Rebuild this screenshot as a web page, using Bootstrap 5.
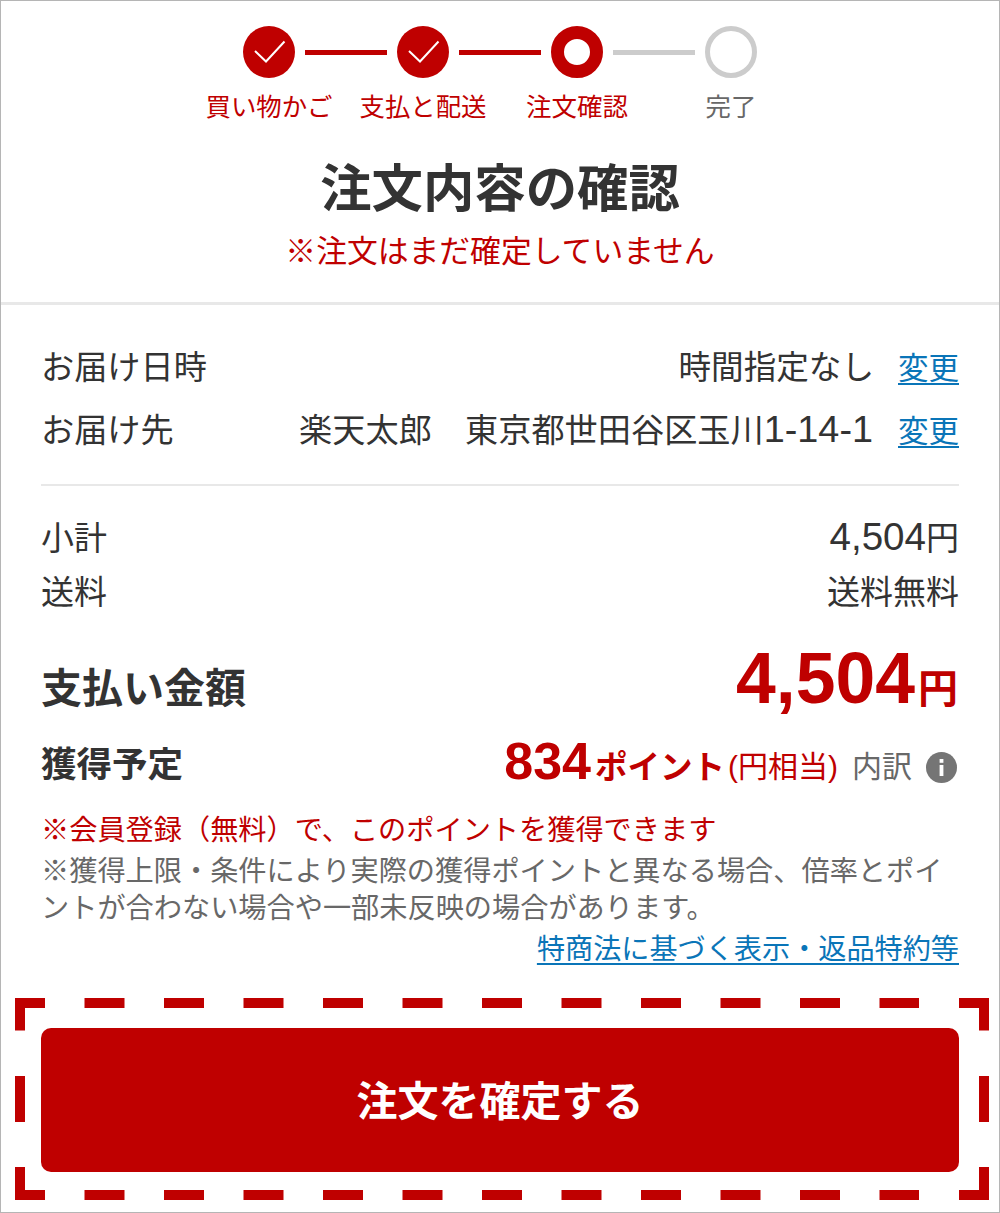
<!DOCTYPE html>
<html lang="ja"><head><meta charset="utf-8"><title>注文内容の確認</title>
<link href="https://cdn.jsdelivr.net/npm/bootstrap@5.3.0/dist/css/bootstrap.min.css" rel="stylesheet">
<style>
html,body{margin:0;background:#fff}
body{font-family:"Liberation Sans","Noto Sans CJK JP",sans-serif;color:#333;width:1000px;height:1213px;overflow:hidden}
.shell{width:1000px;height:1213px;border:1px solid #b5b5b5;position:relative}
.stepbar{padding-top:25px}
.dot{width:52px;height:52px;border-radius:50%;background:#bf0000;flex:none}
.dot svg{display:block}
.dot-cur{background:#fff;border:13px solid #bf0000}
.dot-off{background:#fff;border:5px solid #ccc}
.rail{width:82px;height:5px;background:#bf0000;margin:0 10px;flex:none}
.rail-off{background:#ccc}
.labels{margin-top:15px;height:28px}
.lab{width:154px;text-align:center;font-size:25.4px;line-height:28px;color:#bf0000;white-space:nowrap}
.lab-off{color:#686868}
.lab-c{font-size:25.5px}
.title{font-size:51.4px;line-height:60px;font-weight:700;margin:38px 0 0;color:#333}
.warn{font-size:30.8px;line-height:40px;color:#bf0000;margin-top:13px}
.rule1{height:3px;background:#e8e8e8;margin-top:30px}
.body-wrap{padding:0 40px}
.rowa{font-size:33.2px;line-height:44px;height:44px}
.rowa-first{margin-top:41px}
.rowa-next{margin-top:19px}
.ln{font-size:30.5px;color:#0a75b8;text-decoration:underline;text-underline-offset:4px;text-decoration-thickness:2px;margin-left:25px}
.ln-tight{margin-left:24px}
.txt-s{font-size:32.6px}
.rule2{height:2px;background:#e8e8e8;margin-top:31px}
.rowb{font-size:33px;line-height:44px;height:44px}
.rowb-first{margin-top:31px}
.rowb-next{margin-top:10px}
.dg{font-size:37.8px;line-height:1}
.dg-w{font-size:38.6px;line-height:1}
.sum{margin-top:17px;height:96px}
.sum-l{font-size:41px;font-weight:700;line-height:50px;margin-top:18px}
.big{font-size:71.5px;font-weight:700;color:#bf0000;line-height:80px;margin-top:6px}
.big-u{font-size:40px;font-weight:700;color:#bf0000;margin-left:3px;margin-right:1px}
.pts{height:56px;margin-top:9px;padding-right:2px}
.pts-l{font-size:35.5px;font-weight:700;line-height:50px}
.n834{font-size:52px;font-weight:700;color:#bf0000;line-height:48px;margin-bottom:8px}
.pt-u{font-size:32.5px;font-weight:700;color:#bf0000;margin-left:4px;margin-top:6px}
.pt-e{font-size:30px;color:#bf0000;margin-left:3px;margin-top:2px}
.pt-in{font-size:30px;color:#686868;margin-left:14px;margin-top:2px}
.ico{width:31px;height:31px;margin-left:14px;margin-top:4px;flex:none;display:block}
.n-red{font-size:28.2px;line-height:38px;color:#bf0000;margin-top:18px}
.n-gray{font-size:28.2px;line-height:37px;color:#686868;margin-top:4px}
.n-link{font-size:28.15px;line-height:38px;text-align:right;margin-top:4px}
.n-link a{color:#0a75b8;text-decoration:underline;text-underline-offset:4px;text-decoration-thickness:2px}
.cta-wrap{padding:0 40px;margin-top:59px}
.cta{display:block;width:100%;height:144px;background:#bf0000;border:0;border-radius:10px;color:#fff;font-size:41px;font-weight:700;line-height:140px;padding:4px 0 0}
.frame{position:absolute;left:-1px;top:-1px;width:1000px;height:1213px;pointer-events:none}
</style></head>
<body>
<div class="shell">
  <div class="stepbar">
    <div class="d-flex justify-content-center align-items-center">
      <div class="dot"><svg width="52" height="52" viewBox="-26 -26 52 52"><path d="M-14 -1 L-3 9.5 L15.5 -10.5" fill="none" stroke="#fff" stroke-width="2"/></svg></div>
      <div class="rail"></div>
      <div class="dot"><svg width="52" height="52" viewBox="-26 -26 52 52"><path d="M-14 -1 L-3 9.5 L15.5 -10.5" fill="none" stroke="#fff" stroke-width="2"/></svg></div>
      <div class="rail"></div>
      <div class="dot dot-cur"></div>
      <div class="rail rail-off"></div>
      <div class="dot dot-off"></div>
    </div>
    <div class="labels d-flex justify-content-center">
      <div class="lab">買い物かご</div><div class="lab">支払と配送</div><div class="lab lab-c">注文確認</div><div class="lab lab-off">完了</div>
    </div>
  </div>
  <h1 class="title text-center">注文内容の確認</h1>
  <div class="warn text-center">※注文はまだ確定していません</div>
  <div class="rule1"></div>
  <div class="body-wrap">
    <div class="rowa rowa-first d-flex justify-content-between"><span>お届け日時</span><span><span class="txt-s">時間指定なし</span><a class="ln ln-tight" href="#">変更</a></span></div>
    <div class="rowa rowa-next d-flex justify-content-between"><span>お届け先</span><span>楽天太郎　東京都世田谷区玉川<span class="dg">1-14-1</span><a class="ln" href="#">変更</a></span></div>
    <div class="rule2"></div>
    <div class="rowb rowb-first d-flex justify-content-between"><span>小計</span><span><span class="dg-w">4,504</span>円</span></div>
    <div class="rowb rowb-next d-flex justify-content-between"><span>送料</span><span>送料無料</span></div>
    <div class="sum d-flex justify-content-between align-items-center"><span class="sum-l">支払い金額</span><span class="big">4,504<span class="big-u">円</span></span></div>
    <div class="pts d-flex justify-content-between align-items-center"><span class="pts-l">獲得予定</span>
      <span class="d-flex align-items-center"><span class="n834">834</span><span class="pt-u">ポイント</span><span class="pt-e">(円相当)</span><span class="pt-in">内訳</span>
      <svg class="ico" viewBox="0 0 31 31"><circle cx="15.5" cy="15.5" r="15.5" fill="#757575"/><rect x="13.6" y="13" width="3.8" height="11" fill="#fff"/><rect x="13.6" y="7" width="3.8" height="3.8" fill="#fff"/></svg></span></div>
    <div class="n-red">※会員登録（無料）で、このポイントを獲得できます</div>
    <div class="n-gray">※獲得上限・条件により実際の獲得ポイントと異なる場合、倍率とポイントが合わない場合や一部未反映の場合があります。</div>
    <div class="n-link"><a href="#">特商法に基づく表示・返品特約等</a></div>
  </div>
  <div class="cta-wrap"><button class="cta btn" type="button">注文を確定する</button></div>
  <svg class="frame" viewBox="0 0 1000 1213">
    <g fill="none" stroke="#bf0000" stroke-width="10">
      <path d="M20 1030.5V1003H45M959 1003H984V1030.5M20 1167V1195H45M959 1195H984V1167"/>
      <path d="M84.5 1003H919M84.5 1195H919" stroke-dasharray="40 39.5"/>
      <path d="M20 1076V1122M984 1076V1122"/>
    </g>
  </svg>
</div>
</body></html>
